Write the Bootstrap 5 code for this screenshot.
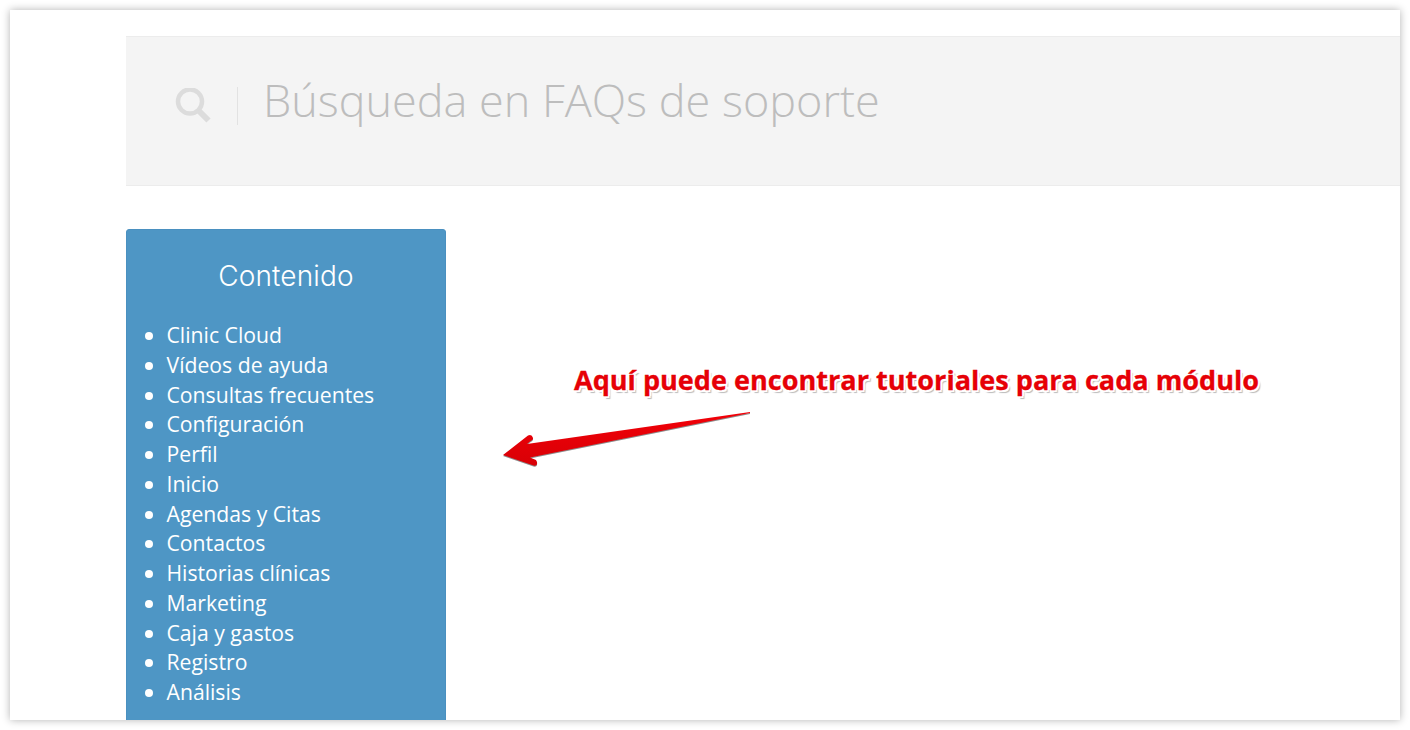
<!DOCTYPE html>
<html lang="es">
<head>
<meta charset="utf-8">
<title>Búsqueda en FAQs de soporte</title>
<link href="https://cdn.jsdelivr.net/npm/bootstrap@5.3.0/dist/css/bootstrap.min.css" rel="stylesheet">
<style>
html, body { height: 100%; background: #fff; overflow: hidden; }
.shot-frame { position: relative; height: 710px; margin: 10px; background: #fff; box-shadow: 0 0 8px rgba(0,0,0,.3); overflow: hidden; padding: 26px 0 0 116px; font-family: "Open Sans", sans-serif; }
.search-band { height: 150px; background: #f4f4f4; border-top: 1px solid #ececec; border-bottom: 1px solid #ececec; padding-left: 49px; padding-bottom: 10px; }
.search-sep { width: 1px; height: 38px; background: #e2e2e2; margin: 0 25px 0 26px; }
.search-title { font-size: 45px; font-weight: 300; color: #bdbdbd; line-height: 1; margin: 0 0 14px; white-space: nowrap; }
.search-glyph { width: 36px; height: 36px; }
.toc-panel { width: 320px; height: 520px; margin-top: 43px; background: #4e96c5; border: 1px solid #4a90c0; border-radius: 3px 3px 0 0; color: #fff; }
.toc-title { font-family: "Inter", sans-serif; font-size: 28px; font-weight: 300; letter-spacing: .15px; line-height: 30px; text-align: center; margin: 31px 0 29px 0; }
.toc-items { list-style: disc; margin: 0; padding-left: 39.5px; font-size: 21.2px; line-height: 29.75px; }
.note-text { position: absolute; left: 564px; top: 351px; margin: 0; font-size: 27.08px; font-weight: 700; line-height: 38px; color: #e60006; -webkit-text-stroke: .3px #e60006; white-space: nowrap; text-shadow: 1.5px 1.5px 0 #fff, -1.5px -1.5px 0 #fff, 1.5px -1.5px 0 #fff, -1.5px 1.5px 0 #fff, 2px 0 0 #fff, -2px 0 0 #fff, 0 2px 0 #fff, 0 -2px 0 #fff, 2.5px 2.5px 1px #bbb; }
.note-arrow { position: absolute; left: 480px; top: 390px; width: 270px; height: 80px; filter: drop-shadow(.5px 1px .5px rgba(0,0,0,.45)); }
</style>
</head>
<body>
<div class="shot-frame">
  <div class="search-band d-flex align-items-center">
    <svg class="search-glyph flex-shrink-0" viewBox="0 0 36 36" aria-hidden="true">
      <circle cx="15" cy="13.5" r="12" fill="none" stroke="#dcdcdc" stroke-width="4.5"/>
      <path d="M23.5 22.5 L33.5 32.5" fill="none" stroke="#dcdcdc" stroke-width="6"/>
    </svg>
    <span class="search-sep flex-shrink-0"></span>
    <h1 class="search-title">Búsqueda en FAQs de soporte</h1>
  </div>
  <aside class="toc-panel">
    <h2 class="toc-title">Contenido</h2>
    <ul class="toc-items">
      <li>Clinic Cloud</li>
      <li>Vídeos de ayuda</li>
      <li>Consultas frecuentes</li>
      <li>Configuración</li>
      <li>Perfil</li>
      <li>Inicio</li>
      <li>Agendas y Citas</li>
      <li>Contactos</li>
      <li>Historias clínicas</li>
      <li>Marketing</li>
      <li>Caja y gastos</li>
      <li>Registro</li>
      <li>Análisis</li>
    </ul>
  </aside>
  <p class="note-text">Aquí puede encontrar tutoriales para cada módulo</p>
  <svg class="note-arrow" viewBox="0 0 270 80" aria-hidden="true">
    <defs><linearGradient id="arrowFill" x1="0" y1="0" x2="0" y2="1"><stop offset="0" stop-color="#f20008"/><stop offset="1" stop-color="#d80006"/></linearGradient></defs>
    <path d="M13 55 L38 35.5 Q42 34 43 38 Q43.5 40 40 41.5 L37 44 L260 12 L260 13 L40 57.5 L46 60 Q48 63 46.5 65 Q45 66.5 42 65 Z" fill="url(#arrowFill)"/>
  </svg>
</div>
</body>
</html>
